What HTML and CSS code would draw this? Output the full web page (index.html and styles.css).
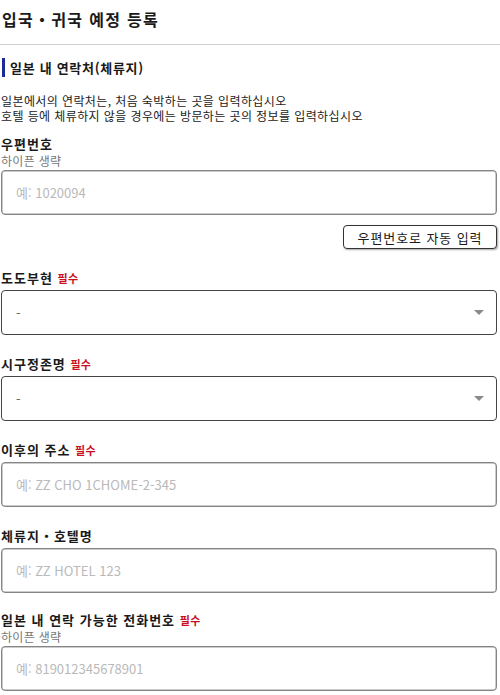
FILE: index.html
```html
<!DOCTYPE html>
<html lang="ko">
<head>
<meta charset="utf-8">
<title>입국・귀국 예정 등록</title>
<link rel="stylesheet" href="styles.css">
</head>
<body>
<header class="page-header">
  <h1 class="page-title">입국・귀국 예정 등록</h1>
</header>
<main class="content">
  <h2 class="section-title">일본 내 연락처(체류지)</h2>
  <div class="desc">
    <div class="desc-line">일본에서의 연락처는, 처음 숙박하는 곳을 입력하십시오</div>
    <div class="desc-line">호텔 등에 체류하지 않을 경우에는 방문하는 곳의 정보를 입력하십시오</div>
  </div>

  <div class="field first">
    <div class="label">우편번호</div>
    <div class="hint">하이픈 생략</div>
    <div class="input"><span class="ph">예: 1020094</span></div>
    <div class="btn-row"><button class="btn">우편번호로 자동 입력</button></div>
  </div>

  <div class="field">
    <div class="label">도도부현 <span class="req">필수</span></div>
    <div class="select"><span class="val">-</span><span class="arrow"></span></div>
  </div>

  <div class="field">
    <div class="label">시구정존명 <span class="req">필수</span></div>
    <div class="select"><span class="val">-</span><span class="arrow"></span></div>
  </div>

  <div class="field">
    <div class="label">이후의 주소 <span class="req">필수</span></div>
    <div class="input"><span class="ph">예: ZZ CHO 1CHOME-2-345</span></div>
  </div>

  <div class="field">
    <div class="label">체류지・호텔명</div>
    <div class="input"><span class="ph">예: ZZ HOTEL 123</span></div>
  </div>

  <div class="field last">
    <div class="label">일본 내 연락 가능한 전화번호 <span class="req">필수</span></div>
    <div class="hint">하이픈 생략</div>
    <div class="input"><span class="ph">예: 819012345678901</span></div>
  </div>
</main>
</body>
</html>
```

FILE: styles.css
```css
* { box-sizing: border-box; }
html, body {
  margin: 0;
  padding: 0;
  background: #fff;
  font-family: "Noto Sans CJK KR", "Noto Sans", sans-serif;
  color: #222;
}
.page-header {
  height: 45px;
  border-bottom: 1px solid #cfcfcf;
  display: flex;
  align-items: center;
  padding: 0 2px 6px;
}
.page-title {
  margin: 0;
  font-size: 16px;
  font-weight: 700;
  line-height: 20px;
  letter-spacing: 1.3px;
  color: #1a1a1a;
}
.content {
  padding: 0 3px 0 1px;
}
.section-title {
  margin: 13px 0 0 1px;
  font-size: 13px;
  font-weight: 700;
  line-height: 19px;
  letter-spacing: 0.7px;
  border-left: 3px solid #1c2a9c;
  padding-left: 5px;
  color: #1a1a1a;
}
.desc {
  margin: 16px 0 0;
  font-size: 12px;
  color: #222;
  letter-spacing: 0.4px;
}
.desc-line { height: 15px; line-height: 15px; }
.field { margin-top: 20px; display: flex; flex-direction: column; }
.field.first { margin-top: 12px; }
.field.last { margin-top: 18px; }
.label {
  font-size: 13px;
  font-weight: 700;
  height: 17px;
  line-height: 17px;
  margin-bottom: 4px;
  letter-spacing: 1px;
  color: #1a1a1a;
  white-space: nowrap;
}
.req {
  font-size: 11px;
  line-height: 1;
  color: #c8101e;
  font-weight: 700;
  letter-spacing: 0.3px;
}
.hint {
  font-size: 12px;
  height: 15px;
  line-height: 15px;
  color: #777;
  margin-top: -3px;
  margin-bottom: 2px;
  letter-spacing: 0.3px;
}
.input, .select {
  height: 45px;
  border: 1px solid #858585;
  border-radius: 4px;
  display: flex;
  align-items: center;
  padding: 0 14px;
  background: #fff;
}
.input { box-shadow: inset 0 0 0 0.5px #999; }
.ph { font-size: 13px; color: #b9b9b9; }
.select {
  border-color: #444;
  justify-content: space-between;
  padding-right: 12px;
}
.val { font-size: 13px; color: #666; }
.arrow {
  width: 0; height: 0;
  border-left: 5px solid transparent;
  border-right: 5px solid transparent;
  border-top: 5px solid #8a8a8a;
}
.btn-row { display: flex; justify-content: flex-end; margin-top: 10px; }
.btn {
  font-family: inherit;
  font-size: 13px;
  line-height: 17px;
  letter-spacing: 0.9px;
  color: #1a1a1a;
  background: #fff;
  border: 1px solid #333;
  border-radius: 4px;
  height: 24px;
  width: 154px;
  padding: 0;
  box-shadow: 1px 1px 2px rgba(0,0,0,0.35);
}
```
